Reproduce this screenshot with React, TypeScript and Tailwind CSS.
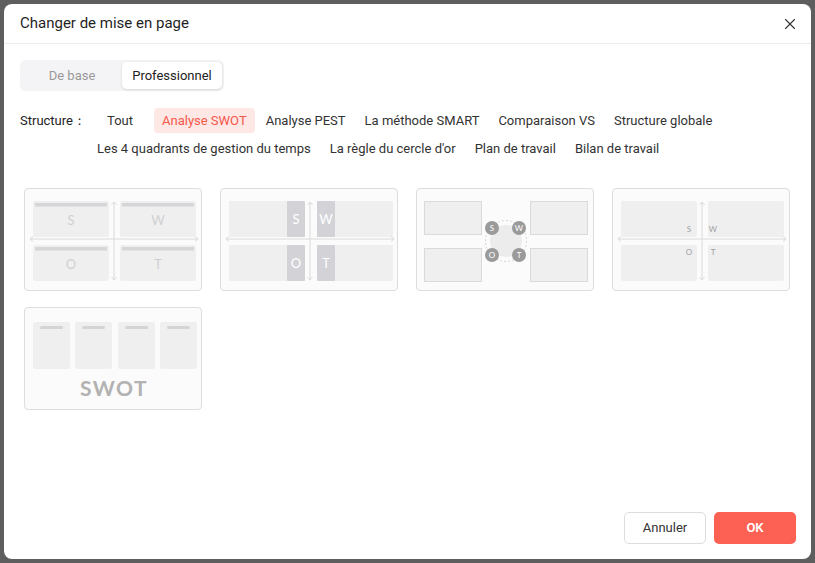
import React, { useState } from 'react';
import { X } from 'lucide-react';

const row1 = ['Tout', 'Analyse SWOT', 'Analyse PEST', 'La méthode SMART', 'Comparaison VS', 'Structure globale'];
const row2 = ['Les 4 quadrants de gestion du temps', "La règle du cercle d'or", 'Plan de travail', 'Bilan de travail'];

const box = '#efeff0';
const line = '#dadada';

function Arrows() {
  return (
    <g stroke={line} strokeWidth="1" fill="none">
      <path d="M89 13 V91" />
      <path d="M86.5 16 L89 13 L91.5 16 M86.5 88 L89 91 L91.5 88" />
      <path d="M5 50 H173" />
      <path d="M8 47.5 L5 50 L8 52.5 M170 47.5 L173 50 L170 52.5" />
    </g>
  );
}

function Thumb1() {
  const cells = [
    { x: 8, y: 12, l: 'S' },
    { x: 95, y: 12, l: 'W' },
    { x: 8, y: 56, l: 'O' },
    { x: 95, y: 56, l: 'T' },
  ];
  return (
    <svg width="178" height="103" viewBox="0 0 178 103">
      {cells.map((c) => (
        <g key={c.l}>
          <rect x={c.x} y={c.y} width="76" height="36" rx="2" fill={box} />
          <rect x={c.x + 2} y={c.y + 2} width="72" height="3.5" fill="#d6d6d8" />
          <text x={c.x + 38} y={c.y + 24} textAnchor="middle" fontSize="13" fill="#cfcfd1" fontFamily="Lato, sans-serif">{c.l}</text>
        </g>
      ))}
      <Arrows />
    </svg>
  );
}

function Thumb2() {
  return (
    <svg width="178" height="103" viewBox="0 0 178 103">
      <rect x="8" y="12" width="76" height="36" rx="1" fill={box} />
      <rect x="96" y="12" width="76" height="36" rx="1" fill={box} />
      <rect x="8" y="56" width="76" height="36" rx="1" fill={box} />
      <rect x="96" y="56" width="76" height="36" rx="1" fill={box} />
      {[
        { x: 66, y: 12, l: 'S' },
        { x: 96, y: 12, l: 'W' },
        { x: 66, y: 56, l: 'O' },
        { x: 96, y: 56, l: 'T' },
      ].map((c) => (
        <g key={c.l}>
          <rect x={c.x} y={c.y} width="18" height="36" rx="1" fill="#d3d3d7" />
          <text x={c.x + 9} y={c.y + 23} textAnchor="middle" fontSize="13" fill="#ffffff" fontFamily="Lato, sans-serif">{c.l}</text>
        </g>
      ))}
      <Arrows />
    </svg>
  );
}

function Thumb3() {
  return (
    <svg width="178" height="103" viewBox="0 0 178 103">
      {[
        [7, 12],
        [113, 12],
        [7, 59],
        [113, 59],
      ].map(([x, y]) => (
        <rect key={`${x}-${y}`} x={x + 0.5} y={y + 0.5} width="57" height="33" fill={box} stroke="#dadada" />
      ))}
      <circle cx="89" cy="52" r="20.5" fill="none" stroke="#d4d4d4" strokeDasharray="2 2" />
      <circle cx="89" cy="52" r="16" fill="#ececec" />
      {[
        [75, 39, 'S'],
        [102, 39, 'W'],
        [75, 66, 'O'],
        [102, 66, 'T'],
      ].map(([x, y, l]) => (
        <g key={l as string}>
          <circle cx={x as number} cy={y as number} r="7" fill="#9a9a9a" />
          <text x={x as number} y={(y as number) + 3} textAnchor="middle" fontSize="8" fill="#ffffff" fontFamily="Lato, sans-serif">{l}</text>
        </g>
      ))}
    </svg>
  );
}

function Thumb4() {
  return (
    <svg width="178" height="103" viewBox="0 0 178 103">
      <rect x="8" y="12" width="76" height="36" rx="2" fill={box} />
      <rect x="95" y="12" width="76" height="36" rx="2" fill={box} />
      <rect x="8" y="56" width="76" height="36" rx="2" fill={box} />
      <rect x="95" y="56" width="76" height="36" rx="2" fill={box} />
      {[
        [76, 43, 'S'],
        [100, 43, 'W'],
        [76, 66, 'O'],
        [100, 66, 'T'],
      ].map(([x, y, l]) => (
        <text key={l as string} x={x as number} y={y as number} textAnchor="middle" fontSize="8" fill="#a0a0a0" fontFamily="Lato, sans-serif">{l}</text>
      ))}
      <Arrows />
    </svg>
  );
}

function Thumb5() {
  return (
    <svg width="178" height="103" viewBox="0 0 178 103">
      {[8, 50, 93, 135].map((x) => (
        <g key={x}>
          <rect x={x} y="14" width="37" height="47" rx="2" fill={box} />
          <rect x={x + 7} y="18" width="23" height="3" rx="1.5" fill="#d4d4d6" />
        </g>
      ))}
      <text x="89" y="88" textAnchor="middle" fontSize="21" fontWeight="700" letterSpacing="1.5" fill="#b2b2b2" fontFamily="Lato, sans-serif">SWOT</text>
    </svg>
  );
}

const thumbs = [Thumb1, Thumb2, Thumb3, Thumb4, Thumb5];

export default function App() {
  const [tab, setTab] = useState('pro');
  const [active, setActive] = useState('Analyse SWOT');

  const chip = (label: string) => (
    <button
      key={label}
      onClick={() => setActive(label)}
      className={`h-[25px] rounded-[4px] ${label === 'Tout' ? 'min-w-[62px] px-2' : 'px-2'} text-[13px] leading-[25px] ${
        active === label ? 'bg-[#fde8e5] text-[#f5574c]' : 'text-[#333333]'
      }`}
    >
      {label}
    </button>
  );

  return (
    <div className="h-[563px] w-[815px] bg-[#5e5e5e] p-[4px] font-['Roboto',sans-serif]">
      <div className="flex h-[555px] w-[807px] flex-col rounded-[8px] bg-white">
        <div className="flex h-[40px] items-center justify-between border-b border-[#ececec] pl-4 pr-[12px]">
          <h1 className="text-[15px] text-[#1f1f1f]">Changer de mise en page</h1>
          <X className="h-[18px] w-[18px] text-[#333333]" strokeWidth={1.5} />
        </div>

        <div className="px-4 pt-[16px]">
          <div className="flex h-[31px] w-[204px] rounded-[6px] bg-[#f4f4f6] p-[2px] text-[13px]">
            <button
              onClick={() => setTab('base')}
              className={`w-[100px] rounded-[5px] ${tab === 'base' ? 'bg-white text-[#222222] shadow-[0_1px_3px_rgba(0,0,0,0.12)]' : 'text-[#999999]'}`}
            >
              De base
            </button>
            <button
              onClick={() => setTab('pro')}
              className={`w-[100px] rounded-[5px] ${tab === 'pro' ? 'bg-white text-[#222222] shadow-[0_1px_3px_rgba(0,0,0,0.12)]' : 'text-[#999999]'}`}
            >
              Professionnel
            </button>
          </div>

          <div className="mt-[17px] flex text-[13px]">
            <div className="w-[69px] shrink-0 leading-[25px] text-[#222222]">Structure：</div>
            <div className="flex flex-col gap-[3px]">
              <div className="flex gap-[3px]">{row1.map(chip)}</div>
              <div className="flex gap-[3px]">{row2.map(chip)}</div>
            </div>
          </div>

          <div className="mt-[27px] grid grid-cols-[repeat(4,178px)] gap-x-[18px] gap-y-[16px] pl-[4px]">
            {thumbs.map((T, i) => (
              <div key={i} className="h-[103px] w-[178px] overflow-hidden rounded-[4px] border border-[#dddddd] bg-[#fbfbfb]">
                <T />
              </div>
            ))}
          </div>
        </div>

        <div className="mt-auto flex justify-end gap-2 pb-[15px] pr-[15px]">
          <button className="h-[32px] w-[82px] rounded-[5px] border border-[#dddddd] bg-white text-[13px] text-[#333333]">Annuler</button>
          <button className="h-[32px] w-[82px] rounded-[5px] bg-[#fd6154] text-[13px] font-semibold text-white">OK</button>
        </div>
      </div>
    </div>
  );
}
